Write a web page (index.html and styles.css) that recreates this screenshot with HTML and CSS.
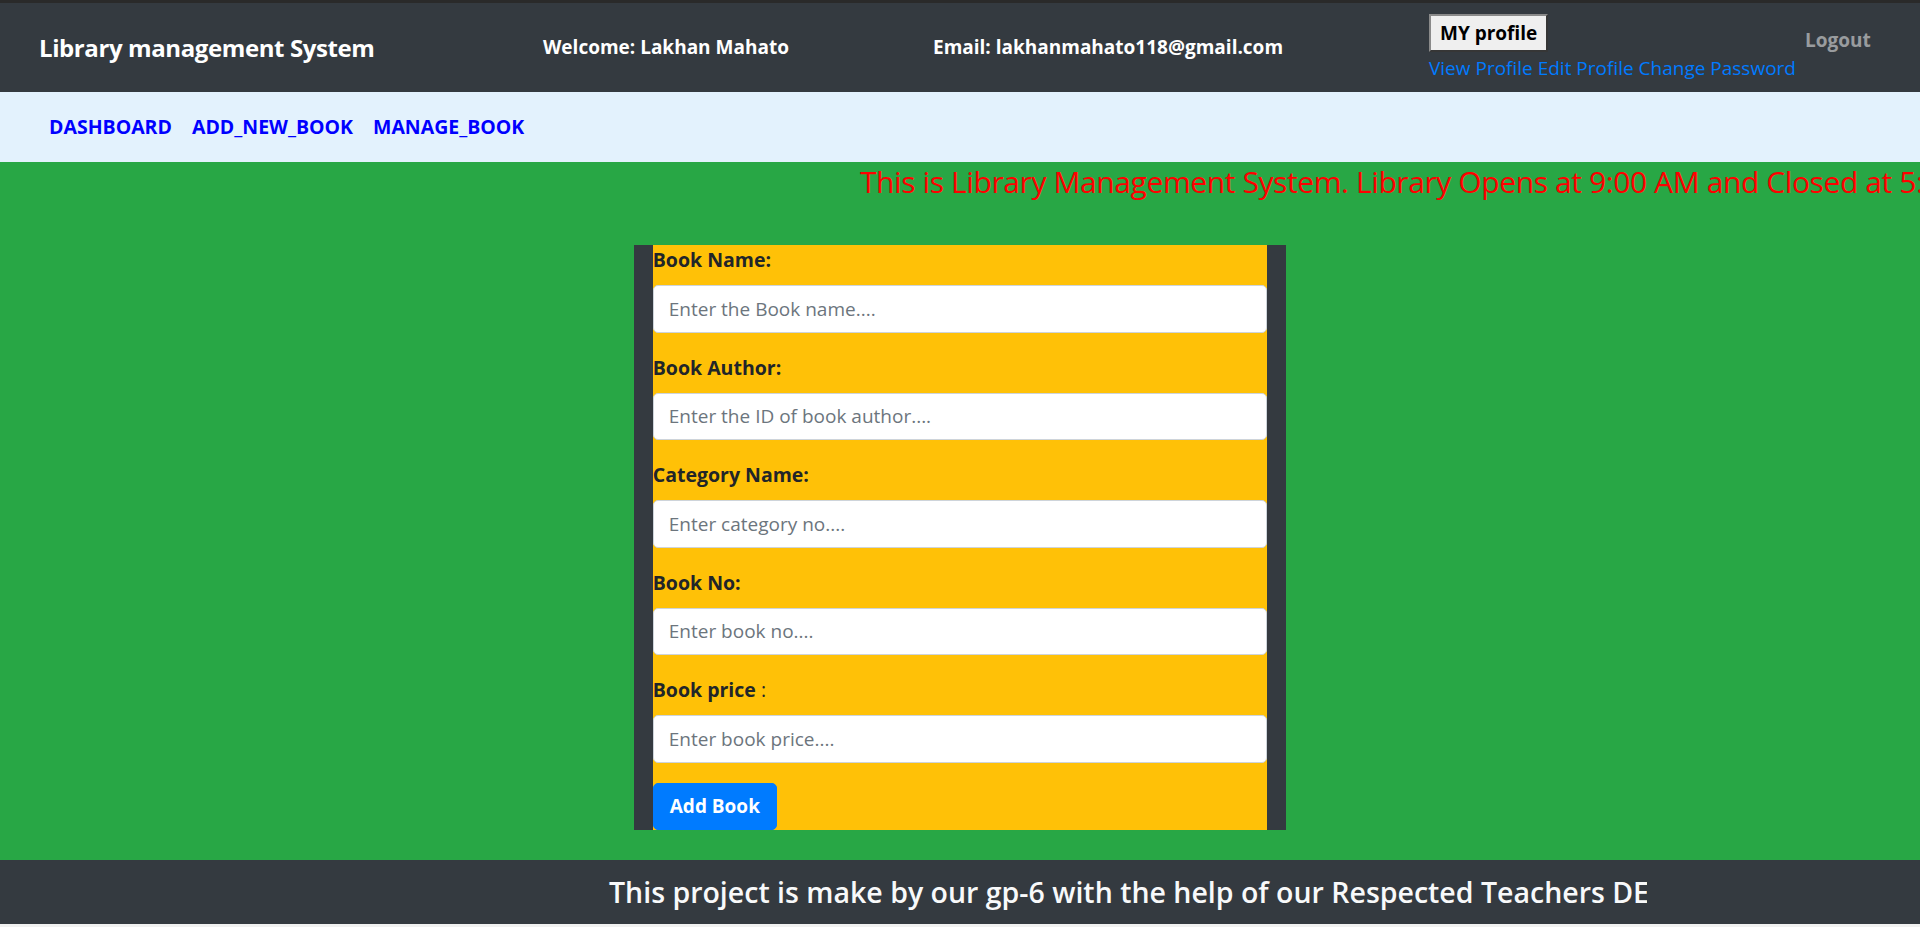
FILE: index.html
```html
<!DOCTYPE html>
<html>
<head>
<meta charset="utf-8">
<title>Add New Book</title>
<link rel="stylesheet" href="styles.css">
</head>
<body>
<header class="topbar">
  <div class="brand">Library management System</div>
  <div class="info">Welcome: Lakhan Mahato</div>
  <div class="info">Email: lakhanmahato118@gmail.com</div>
  <div class="profile">
    <button class="profile-btn" type="button">MY profile</button>
    <div class="profile-links"><a href="#">View Profile</a> <a href="#">Edit Profile</a> <a href="#">Change Password</a></div>
  </div>
  <a class="logout" href="#">Logout</a>
</header>
<nav class="subnav">
  <a href="#">DASHBOARD</a>
  <a href="#">ADD_NEW_BOOK</a>
  <a href="#">MANAGE_BOOK</a>
</nav>
<main class="content">
  <div class="notice"><span>This is Library Management System. Library Opens at 9:00 AM and Closed at 5:00 PM.</span></div>
  <div class="form-col">
    <form class="book-form">
      <div class="group">
        <label class="lbl">Book Name:</label>
        <input class="field" type="text" placeholder="Enter the Book name....">
      </div>
      <div class="group">
        <label class="lbl">Book Author:</label>
        <input class="field" type="text" placeholder="Enter the ID of book author....">
      </div>
      <div class="group">
        <label class="lbl">Category Name:</label>
        <input class="field" type="text" placeholder="Enter category no....">
      </div>
      <div class="group">
        <label class="lbl">Book No:</label>
        <input class="field" type="text" placeholder="Enter book no....">
      </div>
      <div class="group">
        <label class="lbl"><b>Book price</b> <span class="plain">:</span></label>
        <input class="field" type="text" placeholder="Enter book price....">
      </div>
      <button class="submit" type="button">Add Book</button>
    </form>
  </div>
</main>
<footer class="footer">
  <div class="footer-clip"><span>This project is make by our gp-6 with the help of our Respected Teachers DEV SIR and all other teachers.</span></div>
</footer>
</body>
</html>
```

FILE: styles.css
```css
* { box-sizing: border-box; }
html, body { margin: 0; padding: 0; }
body {
  font-family: "Open Sans", "Noto Sans", sans-serif;
  font-size: 20px;
  line-height: 1.5;
  color: #212529;
  background: #f1f1f1;
}
.topbar {
  height: 92px;
  border-top: 3px solid #2a2a2a;
  background: #343a40;
  display: grid;
  grid-template-columns: 504px 390px 496px 376px auto;
  padding-left: 39px;
  align-items: center;
}
.brand {
  color: #fff;
  font-weight: 700;
  font-size: 24px;
  letter-spacing: -0.4px;
  white-space: nowrap;
}
.info {
  color: #fff;
  font-weight: 700;
  font-size: 19px;
  white-space: nowrap;
}
.profile {
  align-self: start;
  margin-top: 11px;
  display: flex;
  flex-direction: column;
  align-items: flex-start;
}
.profile-btn {
  font-family: inherit;
  font-weight: 700;
  font-size: 19px;
  line-height: 30px;
  height: 38px;
  padding: 2px 9px;
  background: #efefef;
  color: #000;
  border: 2px outset #8a8a8a;
  border-radius: 0;
}
.profile-links {
  line-height: 30px;
  margin-top: 1px;
  white-space: nowrap;
  font-size: 19px;
}
.profile-links a { color: #007bff; text-decoration: none; }
.logout {
  align-self: start;
  margin-top: 23px;
  color: rgba(255,255,255,.5);
  font-weight: 700;
  font-size: 19px;
  text-decoration: none;
}
.subnav {
  height: 70px;
  background: #e3f2fd;
  display: flex;
  align-items: center;
  padding-left: 39px;
}
.subnav a {
  padding: 0 10px;
  color: #0000ff;
  font-weight: 700;
  font-size: 19.5px;
  text-decoration: none;
}
.content {
  background: #28a745;
  padding-bottom: 30px;
}
.notice {
  height: 40px;
  line-height: 40px;
  overflow: hidden;
  white-space: nowrap;
  padding-left: 860px;
  color: #ff0000;
  font-size: 30px;
  letter-spacing: -0.4px;
}
.form-col {
  width: 652px;
  margin: 43px auto 0;
  background: #343a40;
  padding: 0 18.75px;
}
.book-form {
  background: #ffc107;
  display: flex;
  flex-direction: column;
  align-items: flex-start;
}
.group {
  width: 100%;
  margin-bottom: 20px;
}
.lbl {
  display: block;
  font-weight: 700;
  font-size: 19.5px;
  margin-bottom: 10px;
  line-height: 30px;
}
.lbl b { font-weight: 700; }
.plain { font-weight: 400; }
.field {
  display: block;
  width: 100%;
  height: 47.5px;
  padding: 7.5px 15px;
  font-family: inherit;
  font-size: 19px;
  color: #495057;
  background: #fff;
  border: 1px solid #ced4da;
  border-radius: 5px;
}
.field::placeholder { color: #6c757d; }
.submit {
  font-family: inherit;
  font-weight: 700;
  font-size: 19px;
  line-height: 30px;
  padding: 7.5px 16px;
  color: #fff;
  background: #007bff;
  border: 1px solid #007bff;
  border-radius: 5px;
}
.footer {
  height: 64px;
  background: #343a40;
  display: flex;
  align-items: center;
}
.footer-clip {
  width: 1647px;
  overflow: hidden;
  white-space: nowrap;
  padding-left: 609px;
  color: #f8f9fa;
  font-weight: 600;
  font-size: 28.5px;
  line-height: 40px;
}
```
